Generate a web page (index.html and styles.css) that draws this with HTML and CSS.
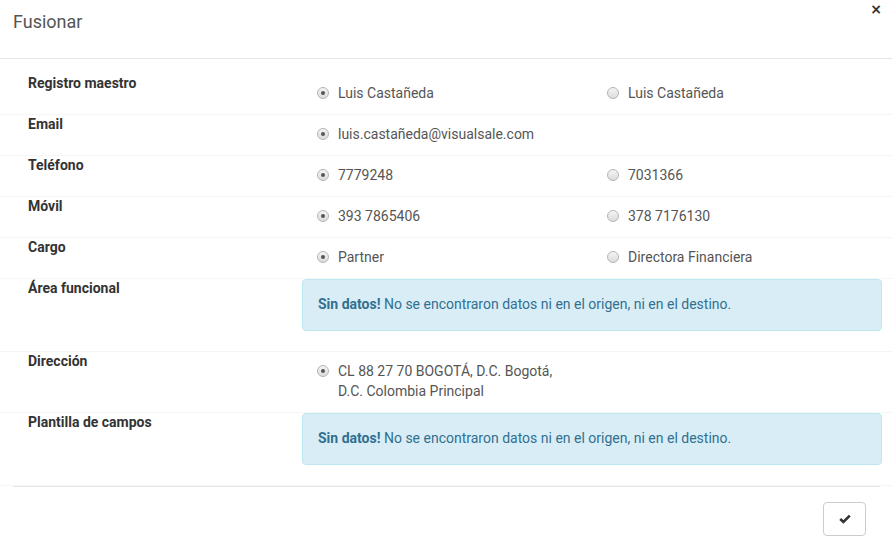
FILE: index.html
```html
<!DOCTYPE html>
<html lang="es">
<head>
<meta charset="utf-8">
<title>Fusionar</title>
<link rel="stylesheet" href="styles.css">
</head>
<body>
<div class="modal">
  <div class="modal-header">
    <h4 class="modal-title">Fusionar</h4>
    <button class="close" type="button">×</button>
  </div>
  <div class="modal-body">
    <div class="row">
      <div class="label">Registro maestro</div>
      <div class="col"><span class="radio"><span class="dot on"></span>Luis Castañeda</span></div>
      <div class="col"><span class="radio"><span class="dot"></span>Luis Castañeda</span></div>
    </div>
    <div class="row">
      <div class="label">Email</div>
      <div class="col"><span class="radio"><span class="dot on"></span>luis.castañeda@visualsale.com</span></div>
      <div class="col"></div>
    </div>
    <div class="row">
      <div class="label">Teléfono</div>
      <div class="col"><span class="radio"><span class="dot on"></span>7779248</span></div>
      <div class="col"><span class="radio"><span class="dot"></span>7031366</span></div>
    </div>
    <div class="row">
      <div class="label">Móvil</div>
      <div class="col"><span class="radio"><span class="dot on"></span>393 7865406</span></div>
      <div class="col"><span class="radio"><span class="dot"></span>378 7176130</span></div>
    </div>
    <div class="row">
      <div class="label">Cargo</div>
      <div class="col"><span class="radio"><span class="dot on"></span>Partner</span></div>
      <div class="col"><span class="radio"><span class="dot"></span>Directora Financiera</span></div>
    </div>
    <div class="row">
      <div class="label">Área funcional</div>
      <div class="alert"><strong>Sin datos!</strong> No se encontraron datos ni en el origen, ni en el destino.</div>
    </div>
    <div class="row">
      <div class="label">Dirección</div>
      <div class="col"><span class="radio"><span class="dot on"></span><span>CL 88 27 70 BOGOTÁ, D.C. Bogotá,<br>D.C. Colombia Principal</span></span></div>
      <div class="col"></div>
    </div>
    <div class="row">
      <div class="label">Plantilla de campos</div>
      <div class="alert"><strong>Sin datos!</strong> No se encontraron datos ni en el origen, ni en el destino.</div>
    </div>
  </div>
  <div class="modal-footer">
    <button class="btn" type="button" aria-label="Aceptar">
      <svg width="12" height="10" viewBox="0 0 12 10"><polyline points="1.2,5 4.4,8 10.8,1.6" fill="none" stroke="#333" stroke-width="2.6"/></svg>
    </button>
  </div>
</div>
</body>
</html>
```

FILE: styles.css
```css
* { box-sizing: border-box; }
html, body { margin: 0; padding: 0; background: #fff; }
body {
  font-family: Roboto, "Liberation Sans", sans-serif;
  font-size: 14px;
  line-height: 20px;
  color: #555;
}
.modal { width: 892px; }
.modal-header {
  height: 59px;
  border-bottom: 1px solid #e5e5e5;
  display: flex;
  justify-content: space-between;
  align-items: flex-start;
  padding: 12px 10px 0 13px;
}
.modal-title {
  margin: 0;
  font-size: 18px;
  line-height: 20px;
  font-weight: 400;
  color: #555;
}
.close {
  border: 0;
  background: none;
  padding: 0;
  margin-top: -13px;
  font-family: "DejaVu Sans", sans-serif;
  font-size: 14px;
  font-weight: bold;
  line-height: 20px;
  color: #333;
  cursor: pointer;
}
.modal-body { padding-top: 15px; }
.row {
  display: grid;
  grid-template-columns: 289px 290px 290px;
  padding-left: 13px;
  border-bottom: 1px solid #f6f6f6;
}
.label {
  padding-left: 15px;
  font-weight: 700;
  color: #333;
  line-height: 18px;
}
.col { padding: 9px 15px 11px; }
.radio {
  display: flex;
  align-items: flex-start;
}
.dot {
  flex: none;
  width: 12px;
  height: 12px;
  margin: 4px 9px 0 0;
  border-radius: 50%;
  border: 1px solid #b5b5b5;
  background: linear-gradient(#f4f4f4, #dcdcdc);
  position: relative;
}
.dot.on::after {
  content: "";
  position: absolute;
  left: 3px;
  top: 3px;
  width: 4px;
  height: 4px;
  border-radius: 50%;
  background: #555;
}
.alert {
  grid-column: 2 / 4;
  padding: 14px 15px 16px;
  margin-bottom: 20px;
  background: #d9edf7;
  border: 1px solid #bce8f1;
  border-radius: 4px;
  color: #31708f;
}
.alert strong { font-weight: 700; }
.modal-footer {
  margin: 0 12px 0 13px;
  border-top: 1px solid #e5e5e5;
  padding: 15px 14px 15px 0;
  display: flex;
  justify-content: flex-end;
}
.btn {
  width: 43px;
  height: 34px;
  border: 1px solid #ccc;
  border-radius: 4px;
  background: #fff;
  display: flex;
  align-items: center;
  justify-content: center;
  padding: 0;
}
```
